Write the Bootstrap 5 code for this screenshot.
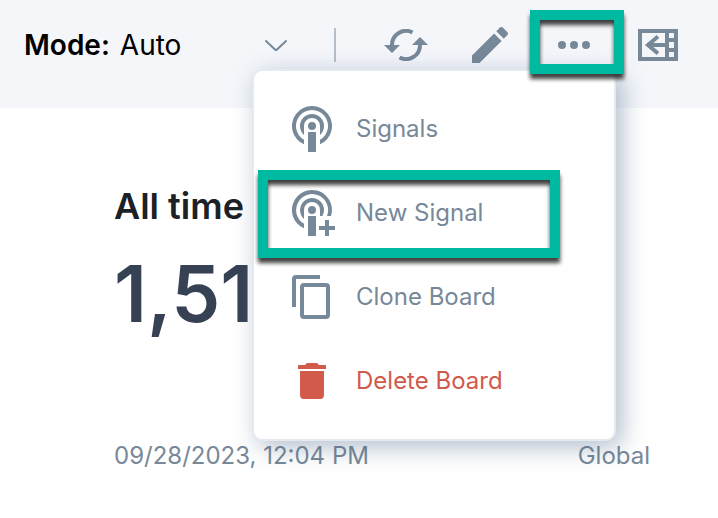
<!DOCTYPE html>
<html lang="en">
<head>
<meta charset="utf-8">
<meta name="viewport" content="width=device-width, initial-scale=1">
<title>Board</title>
<link href="https://cdn.jsdelivr.net/npm/bootstrap@5.3.0/dist/css/bootstrap.min.css" rel="stylesheet">
<style>
  body { font-family: Inter, "Liberation Sans", sans-serif; color: #1b2126; overflow-x: hidden; }
  svg { display: block; fill: currentColor; }
  .toolbar { background: #f4f6fa; padding: 10px 40px 28px 24px; color: #778899; }
  .mode-label { font-size: 28px; line-height: 40px; font-weight: 600; color: #000; margin-right: 10px; }
  .mode-select { width: 168px; height: 40px; padding: 0 32px 0 0; border: 0; font-size: 28px; line-height: 40px; color: #000;
    background-color: transparent; background-position: right 0 center; background-size: 24px 14px;
    background-image: url("data:image/svg+xml,%3Csvg xmlns='http://www.w3.org/2000/svg' viewBox='0 0 24 14'%3E%3Cpath d='M2 3l9 8.500q1 1 2 0l9-8.500' fill='none' stroke='%23778899' stroke-width='2' stroke-linecap='round'/%3E%3C/svg%3E"); }
  .divider { width: 2px; height: 34px; background: #b4bfca; }
  .tool { border: 0; background: none; padding: 0; color: inherit; }
  .edit { margin: 0 22px 0 44px; }
  .panel-toggle { margin-left: 14px; }
  .more { width: 94px; height: 70px; padding-right: 6px; z-index: 1100; }
  .marked { position: relative; }
  .marked::after { content: ""; position: absolute; inset: 0; border: 10px solid #00b9a1; filter: drop-shadow(0 5px 2px rgba(0,0,0,.75)); pointer-events: none; }
  .more.marked::after { bottom: 6px; }
  .board-menu { top: 59px; right: 8px; width: 364px; padding: 16px 4px; border: 2px solid #e4eaf0; border-radius: 10px; box-shadow: 6px 6px 24px rgba(60,90,125,.4); }
  .menu-entry { height: 84px; padding: 0 0 0 34px; font-size: 24px; line-height: 32px; color: #778899; gap: 16px; }
  .menu-entry.marked { width: 302px; }
  .menu-entry.marked::after { inset: -1px 0 -3px; }
  .menu-entry.danger { color: #d15a4a; }
  .tile { padding: 76px 68px 0 114px; }
  .tile-title { font-size: 36px; line-height: 44px; font-weight: 600; }
  .tile-value { font-size: 78px; line-height: 96px; font-weight: 600; color: #374154; margin-top: 18px; }
  .tile-foot { font-size: 24px; line-height: 32px; color: #778899; margin-top: 98px; }
</style>
</head>
<body>
<header class="toolbar d-flex align-items-center">
  <label for="mode" class="mode-label">Mode:</label>
  <select id="mode" class="form-select mode-select"><option>Auto</option><option>Manual</option></select>
  <div class="ms-auto d-flex align-items-center">
    <div class="divider"></div>
    <button class="tool ms-5" aria-label="Refresh">
      <svg width="44" height="32" viewBox="0 0 44 32"><path d="M8 16A14 14 0 0 1 28.500 3.500M36 16A14 14 0 0 1 15.500 28.500" fill="none" stroke="currentColor" stroke-width="4"/><path d="M0 16h16l-8 8zM28 16h16l-8-8z"/></svg>
    </button>
    <button class="tool edit" aria-label="Edit">
      <svg width="36" height="36" viewBox="3 3 18 18"><path d="M3 17.250V21h3.750L17.810 9.940l-3.750-3.750zM20.710 7.040c.39-.39.39-1.020 0-1.410l-2.340-2.340a1 1 0 0 0-1.410 0l-1.830 1.830 3.750 3.750z"/></svg>
    </button>
    <div class="position-relative">
      <button class="tool more marked d-flex align-items-center justify-content-center" aria-label="More" aria-expanded="true">
        <svg width="32" height="8" viewBox="0 0 32 8"><circle cx="4" cy="4" r="4"/><circle cx="16" cy="4" r="4"/><circle cx="28" cy="4" r="4"/></svg>
      </button>
      <div class="dropdown-menu board-menu show">
        <button class="dropdown-item menu-entry d-flex align-items-center">
          <svg width="48" height="48" viewBox="-20 -21 48 48"><path d="M-8 18.330A20 20 0 1 1 8 18.330V13.860A16 16 0 1 0-8 13.860zM-8 8.940A12 12 0 1 1 8 8.940V0A8 8 0 1 0-8 0zM-4 6h8v20h-8z"/><circle r="4"/></svg>
          <span>Signals</span>
        </button>
        <button class="dropdown-item menu-entry marked d-flex align-items-center">
          <svg width="48" height="48" viewBox="-20 -21 48 48"><path d="M-8 18.330A20 20 0 1 1 19 6H15A16 16 0 1 0-8 13.860zM-8 8.940A12 12 0 1 1 10.400 6H8V0A8 8 0 1 0-8 0zM-4 6h8v20h-8zM13 10h4v6h6v4h-6v6h-4v-6H7v-4h6z"/><circle r="4"/></svg>
          <span>New Signal</span>
        </button>
        <button class="dropdown-item menu-entry d-flex align-items-center">
          <svg width="48" height="48" viewBox="0 -2 48 48"><path d="M0 32V4a4 4 0 0 1 4-4h24v4H4v28z"/><rect x="10" y="10" width="26" height="32" rx="2" fill="none" stroke="currentColor" stroke-width="4"/></svg>
          <span>Clone Board</span>
        </button>
        <button class="dropdown-item menu-entry danger d-flex align-items-center">
          <svg width="48" height="48" viewBox="0 0 48 48"><path d="M8 14h24v24a4 4 0 0 1-4 4H12a4 4 0 0 1-4-4zM6 8h7l2-2h10l2 2h7v4H6z"/></svg>
          <span>Delete Board</span>
        </button>
      </div>
    </div>
    <button class="tool panel-toggle" aria-label="Open panel">
      <svg width="40" height="32" viewBox="0 0 40 32"><path fill-rule="evenodd" d="M0 0h40v32H0zM4 4v24h23V4zM31 4v5h5V4zM31 13v6h5v-6zM31 23v5h5v-5z"/><path d="M20 7.500L10 16l10 8.500M10 16h18" fill="none" stroke="currentColor" stroke-width="4"/></svg>
    </button>
  </div>
</header>
<main class="tile">
  <h1 class="tile-title mb-0">All time</h1>
  <div class="tile-value">1,51</div>
  <div class="tile-foot d-flex justify-content-between"><span>09/28/2023, 12:04 PM</span><span>Global</span></div>
</main>
<script src="https://cdn.jsdelivr.net/npm/bootstrap@5.3.0/dist/js/bootstrap.bundle.min.js"></script>
</body>
</html>
